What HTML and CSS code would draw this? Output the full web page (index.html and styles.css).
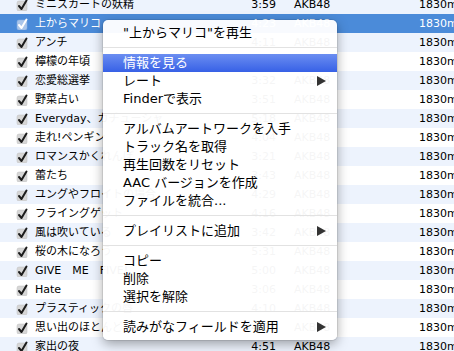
FILE: index.html
```html
<!DOCTYPE html>
<html lang="ja">
<head>
    <meta charset="UTF-8">
    <title>1830m</title>
    <link rel="stylesheet" href="styles.css">
</head>
<body>
    <!-- Lista de canciones -->
    <div class="track-list">
        <div class="row"><span class="check"><svg viewBox="0 0 12 12"><rect x="1" y="2" width="10" height="10" rx="2"/><path d="M3 7 L5.5 10 L10.5 1.5"/></svg></span><span class="name">ミニスカートの妖精</span><span class="time">3:59</span><span class="artist">AKB48</span><span class="album">1830m</span></div>
        <div class="row selected"><span class="check"><svg viewBox="0 0 12 12"><rect x="1" y="2" width="10" height="10" rx="2"/><path d="M3 7 L5.5 10 L10.5 1.5"/></svg></span><span class="name">上からマリコ</span><span class="time">4:23</span><span class="artist">AKB48</span><span class="album">1830m</span></div>
        <div class="row"><span class="check"><svg viewBox="0 0 12 12"><rect x="1" y="2" width="10" height="10" rx="2"/><path d="M3 7 L5.5 10 L10.5 1.5"/></svg></span><span class="name">アンチ</span><span class="time">4:11</span><span class="artist">AKB48</span><span class="album">1830m</span></div>
        <div class="row"><span class="check"><svg viewBox="0 0 12 12"><rect x="1" y="2" width="10" height="10" rx="2"/><path d="M3 7 L5.5 10 L10.5 1.5"/></svg></span><span class="name">檸檬の年頃</span><span class="time">4:38</span><span class="artist">AKB48</span><span class="album">1830m</span></div>
        <div class="row"><span class="check"><svg viewBox="0 0 12 12"><rect x="1" y="2" width="10" height="10" rx="2"/><path d="M3 7 L5.5 10 L10.5 1.5"/></svg></span><span class="name">恋愛総選挙</span><span class="time">3:32</span><span class="artist">AKB48</span><span class="album">1830m</span></div>
        <div class="row"><span class="check"><svg viewBox="0 0 12 12"><rect x="1" y="2" width="10" height="10" rx="2"/><path d="M3 7 L5.5 10 L10.5 1.5"/></svg></span><span class="name">野菜占い</span><span class="time">3:51</span><span class="artist">AKB48</span><span class="album">1830m</span></div>
        <div class="row"><span class="check"><svg viewBox="0 0 12 12"><rect x="1" y="2" width="10" height="10" rx="2"/><path d="M3 7 L5.5 10 L10.5 1.5"/></svg></span><span class="name">Everyday、カチューシャ</span><span class="time">5:18</span><span class="artist">AKB48</span><span class="album">1830m</span></div>
        <div class="row"><span class="check"><svg viewBox="0 0 12 12"><rect x="1" y="2" width="10" height="10" rx="2"/><path d="M3 7 L5.5 10 L10.5 1.5"/></svg></span><span class="name">走れ!ペンギン</span><span class="time">4:04</span><span class="artist">AKB48</span><span class="album">1830m</span></div>
        <div class="row"><span class="check"><svg viewBox="0 0 12 12"><rect x="1" y="2" width="10" height="10" rx="2"/><path d="M3 7 L5.5 10 L10.5 1.5"/></svg></span><span class="name">ロマンスかくれんぼ</span><span class="time">3:21</span><span class="artist">AKB48</span><span class="album">1830m</span></div>
        <div class="row"><span class="check"><svg viewBox="0 0 12 12"><rect x="1" y="2" width="10" height="10" rx="2"/><path d="M3 7 L5.5 10 L10.5 1.5"/></svg></span><span class="name">蕾たち</span><span class="time">3:43</span><span class="artist">AKB48</span><span class="album">1830m</span></div>
        <div class="row"><span class="check"><svg viewBox="0 0 12 12"><rect x="1" y="2" width="10" height="10" rx="2"/><path d="M3 7 L5.5 10 L10.5 1.5"/></svg></span><span class="name">ユングやフロイトの場合</span><span class="time">4:29</span><span class="artist">AKB48</span><span class="album">1830m</span></div>
        <div class="row"><span class="check"><svg viewBox="0 0 12 12"><rect x="1" y="2" width="10" height="10" rx="2"/><path d="M3 7 L5.5 10 L10.5 1.5"/></svg></span><span class="name">フライングゲット</span><span class="time">4:16</span><span class="artist">AKB48</span><span class="album">1830m</span></div>
        <div class="row"><span class="check"><svg viewBox="0 0 12 12"><rect x="1" y="2" width="10" height="10" rx="2"/><path d="M3 7 L5.5 10 L10.5 1.5"/></svg></span><span class="name">風は吹いている</span><span class="time">3:42</span><span class="artist">AKB48</span><span class="album">1830m</span></div>
        <div class="row"><span class="check"><svg viewBox="0 0 12 12"><rect x="1" y="2" width="10" height="10" rx="2"/><path d="M3 7 L5.5 10 L10.5 1.5"/></svg></span><span class="name">桜の木になろう</span><span class="time">5:31</span><span class="artist">AKB48</span><span class="album">1830m</span></div>
        <div class="row"><span class="check"><svg viewBox="0 0 12 12"><rect x="1" y="2" width="10" height="10" rx="2"/><path d="M3 7 L5.5 10 L10.5 1.5"/></svg></span><span class="name">GIVE　ME　FIVE!</span><span class="time">5:00</span><span class="artist">AKB48</span><span class="album">1830m</span></div>
        <div class="row"><span class="check"><svg viewBox="0 0 12 12"><rect x="1" y="2" width="10" height="10" rx="2"/><path d="M3 7 L5.5 10 L10.5 1.5"/></svg></span><span class="name">Hate</span><span class="time">3:06</span><span class="artist">AKB48</span><span class="album">1830m</span></div>
        <div class="row"><span class="check"><svg viewBox="0 0 12 12"><rect x="1" y="2" width="10" height="10" rx="2"/><path d="M3 7 L5.5 10 L10.5 1.5"/></svg></span><span class="name">プラスティックの唇</span><span class="time">4:10</span><span class="artist">AKB48</span><span class="album">1830m</span></div>
        <div class="row"><span class="check"><svg viewBox="0 0 12 12"><rect x="1" y="2" width="10" height="10" rx="2"/><path d="M3 7 L5.5 10 L10.5 1.5"/></svg></span><span class="name">思い出のほとんど</span><span class="time">4:27</span><span class="artist">AKB48</span><span class="album">1830m</span></div>
        <div class="row"><span class="check"><svg viewBox="0 0 12 12"><rect x="1" y="2" width="10" height="10" rx="2"/><path d="M3 7 L5.5 10 L10.5 1.5"/></svg></span><span class="name">家出の夜</span><span class="time">4:51</span><span class="artist">AKB48</span><span class="album">1830m</span></div>
    </div>

    <!-- Menú contextual -->
    <div class="context-menu">
        <div class="menu-item">"上からマリコ"を再生</div>
        <div class="separator"></div>
        <div class="menu-item active">情報を見る</div>
        <div class="menu-item">レート<span class="arrow"></span></div>
        <div class="menu-item">Finderで表示</div>
        <div class="separator"></div>
        <div class="menu-item">アルバムアートワークを入手</div>
        <div class="menu-item">トラック名を取得</div>
        <div class="menu-item">再生回数をリセット</div>
        <div class="menu-item">AAC バージョンを作成</div>
        <div class="menu-item">ファイルを統合...</div>
        <div class="separator"></div>
        <div class="menu-item">プレイリストに追加<span class="arrow"></span></div>
        <div class="separator"></div>
        <div class="menu-item">コピー</div>
        <div class="menu-item">削除</div>
        <div class="menu-item">選択を解除</div>
        <div class="separator"></div>
        <div class="menu-item">読みがなフィールドを適用<span class="arrow"></span></div>
    </div>
</body>
</html>
```

FILE: styles.css
```css
body {
    margin: 0;
    background-color: #ffffff;
    font-family: "DejaVu Sans", "Noto Sans CJK JP", sans-serif;
    overflow: hidden;
    height: 351px;
}
.track-list {
    margin-top: -5px;
}
.row {
    display: grid;
    grid-template-columns: 35px 200px 41px 143px 1fr;
    height: 19px;
    line-height: 19px;
    font-size: 11px;
    color: #000000;
    white-space: nowrap;
}
.row:nth-child(odd) {
    background-color: #edf3fd;
}
.row.selected {
    background-color: #4b8bd9;
    color: #ffffff;
}
.check {
    display: flex;
    align-items: center;
    padding-left: 16px;
}
.check svg {
    width: 12px;
    height: 12px;
}
.check rect {
    fill: #d6d6d6;
    stroke: #bdbdbd;
    stroke-width: 0.5;
}
.check path {
    fill: none;
    stroke: #1c1c1c;
    stroke-width: 2;
    stroke-linecap: round;
    stroke-linejoin: round;
}
.row.selected .check rect {
    fill: #a9c5ea;
    stroke: #8fb2e0;
}
.row.selected .check path {
    stroke: #ffffff;
}
.name {
    overflow: hidden;
}
.time {
    text-align: right;
}
.artist {
    padding-left: 18px;
}
.album {
    overflow: hidden;
}

/* menú */
.context-menu {
    position: absolute;
    left: 103px;
    top: 20px;
    width: 234px;
    padding: 4px 0;
    box-sizing: border-box;
    background-color: rgba(255, 255, 255, 0.96);
    border-radius: 5px;
    box-shadow: 0 0 0 1px rgba(0, 0, 0, 0.08), 0 4px 12px rgba(0, 0, 0, 0.35);
    font-size: 13px;
    color: #000000;
}
.menu-item {
    display: flex;
    align-items: center;
    height: 18px;
    line-height: 18px;
    padding: 0 11px 0 20px;
    white-space: nowrap;
}
.menu-item.active {
    background: linear-gradient(#6b8ef1, #3761e6);
    color: #ffffff;
}
.arrow {
    margin-left: auto;
    width: 0;
    height: 0;
    border-left: 9px solid #333333;
    border-top: 5px solid transparent;
    border-bottom: 5px solid transparent;
}
.separator {
    height: 1px;
    margin: 5px 0 6px;
    background-color: #e2e2e2;
}
```
